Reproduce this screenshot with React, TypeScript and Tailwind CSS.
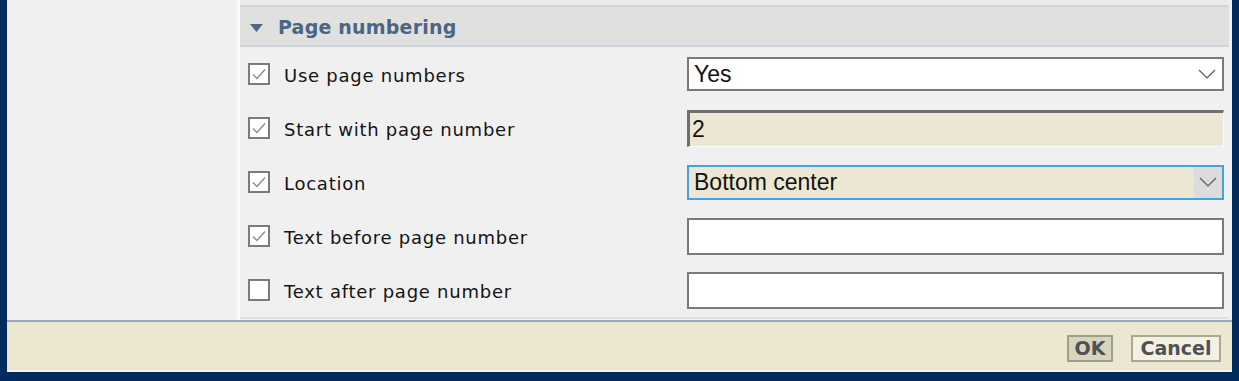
import type { ReactNode } from 'react'

// Page numbering dialog section

const LABEL_FONT = { fontFamily: '"DejaVu Sans", Verdana, sans-serif' }
const INPUT_FONT = { fontFamily: '"Liberation Sans", Arial, sans-serif' }

function Chevron(): JSX.Element {
  return (
    <svg width="18" height="10" viewBox="0 0 18 10" fill="none">
      <path d="M1 1 L9 9 L17 1" stroke="#5a5a5a" strokeWidth="1.2" />
    </svg>
  )
}

function CheckBox({ checked }: { checked: boolean }): JSX.Element {
  return (
    <div className="w-[22px] h-[22px] border-2 border-[#7b7b7b] bg-white flex items-center justify-center shrink-0">
      {checked && (
        <svg width="16" height="14" viewBox="0 0 16 14" fill="none">
          <path d="M2 7.5 L6 11.5 L14 2.5" stroke="#8c8c8c" strokeWidth="1.4" />
        </svg>
      )}
    </div>
  )
}

function Row({ label, checked, children }: { label: string; checked: boolean; children: ReactNode }): JSX.Element {
  return (
    <div className="h-[54px] flex items-center">
      <div className="w-[447px] pl-[8px] flex items-center gap-[14px]">
        <CheckBox checked={checked} />
        <span className="text-[18px] text-[#141414] tracking-[0.75px] pt-[3px]" style={LABEL_FONT}>{label}</span>
      </div>
      <div className="w-[537px]">{children}</div>
    </div>
  )
}

export default function App(): JSX.Element {
  return (
    <div className="w-[1239px] h-[381px] bg-[#022c5e] pl-[7px] pr-[7px] overflow-hidden">
      <div className="flex flex-col h-[374px]">
        {/* main area */}
        <div className="flex h-[320px] bg-[#f0f0f0]">
          <div className="w-[233px] bg-[#f0f0f0] border-r-[3px] border-[#fafafa]" />
          <div className="w-[989px] flex flex-col">
            <div className="h-[5px] bg-[#ececec]" />
            <div className="h-[42px] bg-[#e0e0de] border-y-2 border-[#cdd5db] flex items-center pl-[10px] gap-[15px] pt-[3px]">
              <svg width="13" height="8" viewBox="0 0 13 8">
                <path d="M0 0 L13 0 L6.5 8 Z" fill="#4d6a8c" />
              </svg>
              <span className="text-[19px] font-bold text-[#4a6586] tracking-[0.2px]" style={LABEL_FONT}>Page numbering</span>
            </div>
            <Row label="Use page numbers" checked>
              <div className="h-[34px] border-2 border-[#7a7a7a] bg-white flex items-center justify-between pl-[5px] pr-[6px]">
                <span className="text-[23px] leading-none text-[#111]" style={INPUT_FONT}>Yes</span>
                <Chevron />
              </div>
            </Row>
            <Row label="Start with page number" checked>
              <div className="h-[37px] border-t-[3px] border-l-[3px] border-b border-r border-t-[#6f6f6f] border-l-[#6f6f6f] border-b-[#fafafa] border-r-[#fafafa] bg-[#ece7d2] flex items-center pl-[2px]">
                <span className="text-[23px] leading-none text-[#111]" style={INPUT_FONT}>2</span>
              </div>
            </Row>
            <Row label="Location" checked>
              <div className="h-[35px] border-2 border-[#45a3dc] bg-[#ece7d2] flex items-stretch">
                <div className="flex-1 flex items-center pl-[5px]">
                  <span className="text-[23px] leading-none text-[#111]" style={INPUT_FONT}>Bottom center</span>
                </div>
                <div className="w-[28px] bg-[#dcdcdc] flex items-center justify-center">
                  <Chevron />
                </div>
              </div>
            </Row>
            <Row label="Text before page number" checked>
              <div className="h-[37px] border-2 border-[#7a7a7a] bg-white" />
            </Row>
            <Row label="Text after page number" checked={false}>
              <div className="h-[37px] border-2 border-[#7a7a7a] bg-white" />
            </Row>
            <div className="h-[3px] border-t-2 border-[#dde2e6]" />
          </div>
          <div className="flex-1 bg-[#f0f0f0]" />
        </div>
        {/* footer */}
        <div className="h-[2px] bg-[#9aa9b6]" />
        <div className="h-[50px] bg-[#ece7d1] flex items-center justify-end gap-[18px] pr-[11px] pt-[4px] border-b-2 border-[#f6f3ea]">
          <button className="h-[27px] w-[46px] bg-[#d7d4c0] border-2 border-[#a09e86] text-[19px] font-bold text-[#4f5155] leading-none" style={LABEL_FONT}>
            OK
          </button>
          <button className="h-[27px] w-[90px] bg-[#f4f1e4] border-2 border-[#aaa893] text-[19px] font-bold text-[#4f5155] leading-none" style={LABEL_FONT}>
            Cancel
          </button>
        </div>
      </div>
    </div>
  )
}
